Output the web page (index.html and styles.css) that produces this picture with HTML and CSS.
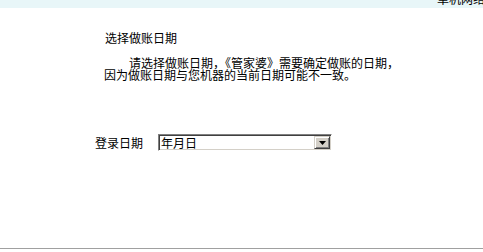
FILE: index.html
```html
<!DOCTYPE html>
<html lang="zh-CN">
<head>
<meta charset="utf-8">
<title>选择做账日期</title>
<link rel="stylesheet" href="styles.css">
</head>
<body>
<div class="page">
  <div class="topbar"><span class="mode">单机网络</span></div>
  <div class="main">
    <div class="title">选择做账日期</div>
    <p class="desc"><span class="indent">请选择做账日期，《管家婆》需要确定做账的日期，</span><br>因为做账日期与您机器的当前日期可能不一致。</p>
    <div class="row">
      <span class="label">登录日期</span>
      <div class="combo">
        <span class="value">年月日</span>
        <span class="btn"><svg width="7" height="4" viewBox="0 0 7 4"><path d="M0 0H7L3.5 4Z" fill="#000"/></svg></span>
      </div>
    </div>
  </div>
  <div class="footer"></div>
</div>
</body>
</html>
```
FILE: styles.css
```css
html, body {
  margin: 0;
  padding: 0;
  background: #fff;
}
body {
  font-family: "Noto Sans CJK SC", "Noto Sans", sans-serif;
  font-size: 12px;
  color: #000;
}
.page {
  width: 483px;
  height: 252px;
  display: flex;
  flex-direction: column;
  overflow: hidden;
}
.topbar {
  height: 8px;
  background: #e8f6f8;
  display: flex;
  justify-content: flex-start;
  overflow: hidden;
  flex: none;
}
.mode {
  margin-left: 437px;
  margin-top: -7px;
  line-height: 12px;
  white-space: nowrap;
}
.main {
  display: flex;
  flex-direction: column;
  flex: 1;
}
.title {
  margin: 24px 0 0 105px;
  line-height: 12px;
}
.desc {
  margin: 13px 0 0 104px;
  line-height: 12px;
  white-space: nowrap;
}
.indent {
  padding-left: 25px;
}
.row {
  margin: 53px 0 0 95px;
  display: flex;
  align-items: center;
  height: 17px;
}
.label {
  width: 63px;
  line-height: 12px;
}
.combo {
  box-sizing: border-box;
  width: 174px;
  height: 17px;
  border-top: 1px solid #808080;
  border-left: 1px solid #808080;
  border-right: 1px solid #fff;
  border-bottom: 1px solid #fff;
  box-shadow: inset 1px 1px 0 #404040, inset -1px -1px 0 #d4d0c8;
  display: flex;
  align-items: center;
  background: #fff;
}
.value {
  flex: 1;
  padding-left: 2px;
  line-height: 12px;
}
.btn {
  box-sizing: border-box;
  width: 16px;
  height: 13px;
  margin-right: 1px;
  background: #d4d0c8;
  border-top: 1px solid #d4d0c8;
  border-left: 1px solid #d4d0c8;
  border-right: 1px solid #404040;
  border-bottom: 1px solid #404040;
  box-shadow: inset 1px 1px 0 #fff, inset -1px -1px 0 #808080;
  display: flex;
  align-items: center;
  justify-content: center;
}
.footer {
  flex: none;
  height: 3px;
  border-top: 1px solid #a0a0a0;
}
```
